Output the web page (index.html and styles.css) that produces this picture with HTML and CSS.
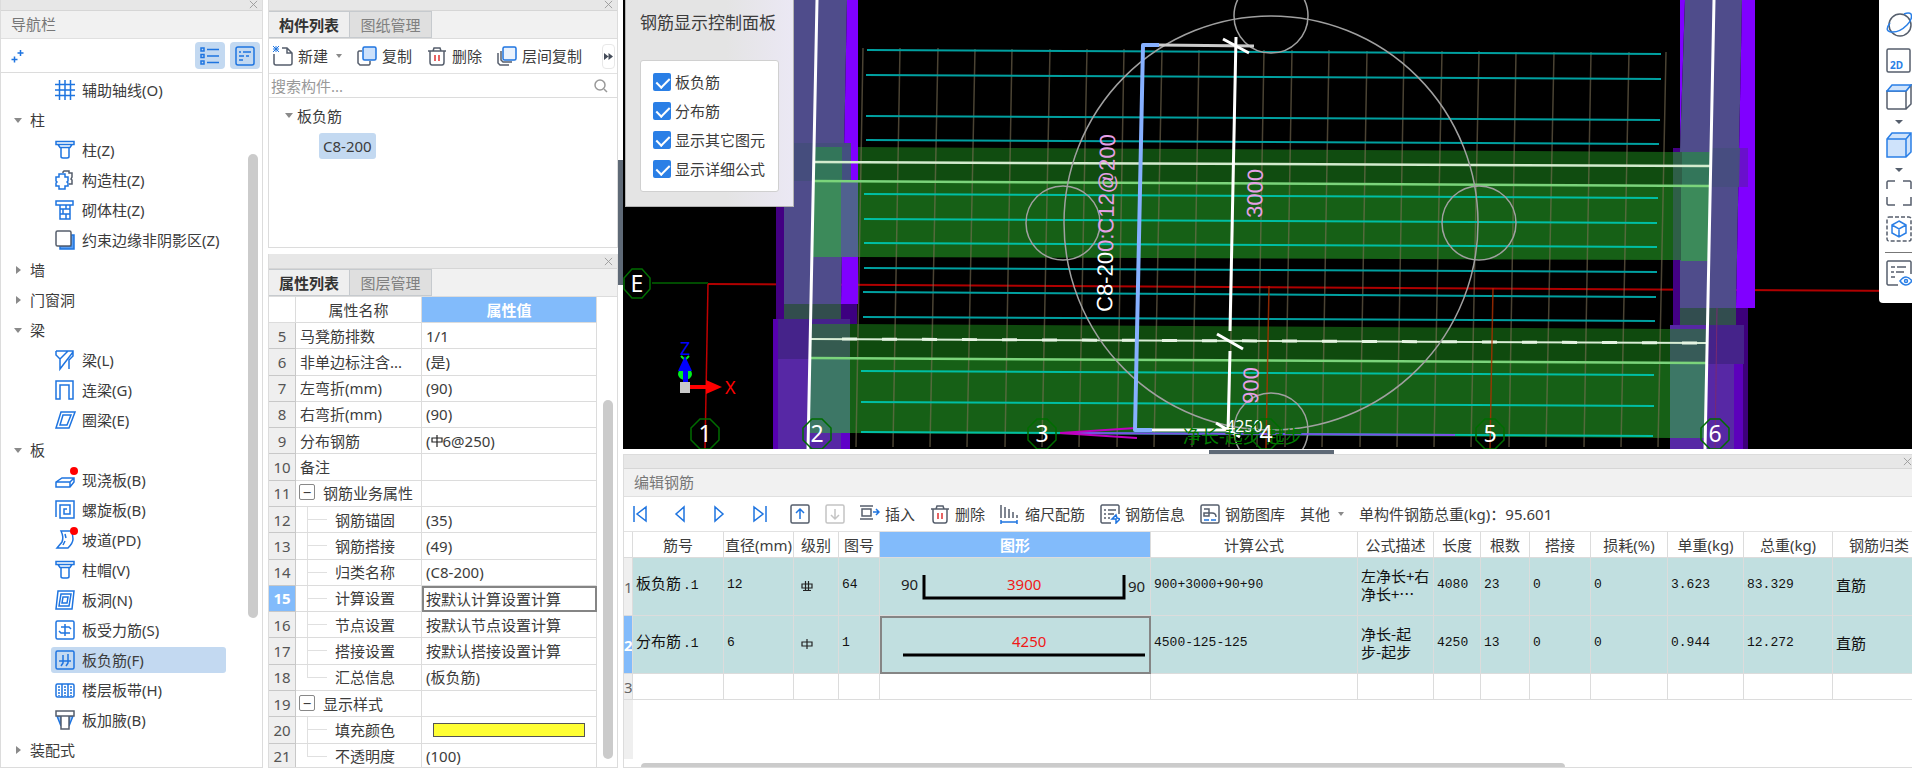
FILE: index.html
```
<!DOCTYPE html>
<html lang="zh-CN">

<head>
    <meta charset="utf-8">
    <meta name="viewport" content="width=device-width, initial-scale=1">
    <title>板负筋</title>
    <link rel="stylesheet" href="styles.css">
</head>

<body>
    <!-- shared icons -->
    <svg class="defs" aria-hidden="true">
        <symbol id="close" viewBox="0 0 10 10"><path d="M1 1l8 8M9 1l-8 8" stroke="#999" fill="none" /></symbol>
        <symbol id="trash" viewBox="0 0 20 20"><path d="M1 5h18M6 5l1-3h6l1 3M3 5v11q0 3 2 3h10q2 0 2-3V5" stroke="#555e6c" stroke-width="1.5" fill="none" /><path d="M8 9v6M12 9v6" stroke="#e03030" stroke-width="1.5" /></symbol>
        <symbol id="cap" viewBox="0 0 20 20"><path d="M1 1.500h18v3h-18zM3 4.500l2 3h10l2-3M6 7.500v9q0 1.500 2 1.500h4q2 0 2-1.500v-9" stroke="#1e74e0" stroke-width="1.500" fill="none" /></symbol>
    </svg>

    <nav class="panel nav">
        <div class="titlebar short"><button aria-label="关闭"><svg><use href="#close" /></svg></button></div>
        <h2>导航栏</h2>
        <div class="nav-tools">
            <button class="plus" aria-label="添加"><svg viewBox="0 0 14 14"><path d="M9.500 1v6M6.500 4h6M3.500 7.500v6M0.500 10.500h6" /></svg></button>
            <button class="toggle" aria-label="列表"><svg viewBox="0 0 20 20"><path d="M1 2h3v3h-3zM1 8.500h3v3h-3zM1 15h3v3h-3zM7 3.500h12M7 10h12M7 16.500h12" /></svg></button>
            <button class="toggle" aria-label="详情"><svg viewBox="0 0 20 20"><rect x="1" y="1" width="18" height="18" rx="2" /><path d="M4 6h2M8 6h8M4 10h5M11 10h3M4 14h4" /></svg></button>
        </div>
        <ul class="tree">
            <li><a href="#"><svg viewBox="0 0 20 20"><path d="M0 4.500h20M0 10h20M0 15.500h20M4.500 0v20M10 0v20M15.500 0v20" /></svg>辅助轴线(O)</a></li>
            <li class="group open">柱</li>
            <li><a href="#"><svg><use href="#cap" /></svg>柱(Z)</a></li>
            <li><a href="#"><svg viewBox="0 0 20 20"><path d="M8 3V2l1-1h5v2h3v4l-1 2 1 1v4h-3" stroke="#555e6c" /><path d="M4 4h6v3h3v4l-1 1 1 1v3h-3v3h-6v-3h-3v-3l1-1-1-1v-4h3z" fill="#fff" /></svg>构造柱(Z)</a></li>
            <li><a href="#"><svg viewBox="0 0 20 20"><path d="M1 1h17v4h-17zM5 5v14h10v-14M5 9h10M5 14h10M11 5v4M8 9v5M11 14v5" /></svg>砌体柱(Z)</a></li>
            <li><a href="#"><svg viewBox="0 0 20 20"><path d="M16 5h3v14h-14v-3h11z" fill="#5b9ef0" /><rect x="1" y="1" width="15" height="15" rx="1.500" fill="#fff" stroke="#555e6c" /></svg>约束边缘非阴影区(Z)</a></li>
            <li class="group">墙</li>
            <li class="group">门窗洞</li>
            <li class="group open">梁</li>
            <li><a href="#"><svg viewBox="0 0 20 20"><path d="M1 1h17v5l-4 4v9M1 1v4l4 4v10l13-17M5 9l8-8" /></svg>梁(L)</a></li>
            <li><a href="#"><svg viewBox="0 0 20 20"><path d="M1 19V1h17v18h-4V5h-9v14z" /></svg>连梁(G)</a></li>
            <li><a href="#"><svg viewBox="0 0 20 20"><path d="M6 2h14l-6 16h-13zM8 5h8l-4 10h-7z" /></svg>圈梁(E)</a></li>
            <li class="group open">板</li>
            <li><a href="#"><svg viewBox="0 0 20 20"><path d="M1 12l6-4h12v4l-4 5h-14zM1 12h14l4-4M15 12v5" /><circle cx="19" cy="1" r="4" class="dot" /></svg>现浇板(B)</a></li>
            <li><a href="#"><svg viewBox="0 0 20 20"><path d="M1 17V1h18v17h-14V5h10v9h-6V9h3" /></svg>螺旋板(B)</a></li>
            <li><a href="#"><svg viewBox="0 0 20 20"><path d="M6 1q3 6 1 11l-5 6h11q5-5 5-9 0-5-2-8zM10 4l1 4M10 11l-2 4" /><circle cx="19" cy="1" r="4" class="dot" /></svg>坡道(PD)</a></li>
            <li><a href="#"><svg><use href="#cap" /></svg>柱帽(V)</a></li>
            <li><a href="#"><svg viewBox="0 0 20 20"><path d="M3 1h16l-2 18h-16zM6 4h10l-2 12h-10zM8 7h5l-1 6h-5z" /></svg>板洞(N)</a></li>
            <li><a href="#"><svg viewBox="0 0 20 20"><rect x="1" y="1" width="18" height="18" rx="1.500" /><path d="M10 4v12M6 7h8l2 2M4 11l2 2h9" /></svg>板受力筋(S)</a></li>
            <li><a href="#" class="selected"><svg viewBox="0 0 20 20"><rect x="1" y="1" width="18" height="18" rx="1.500" /><path d="M4 11h12M8 5v8l-2 3M13 4v9l-2 3" /></svg>板负筋(F)</a></li>
            <li><a href="#"><svg viewBox="0 0 20 20"><rect x="1" y="4" width="18" height="13" rx="1.500" /><path d="M7 4v13M13 4v13" /><path d="M4 6v10M10 6v10M16 6v10" stroke-dasharray="2 1" /></svg>楼层板带(H)</a></li>
            <li><a href="#"><svg viewBox="0 0 20 20"><path d="M2 6l4 10v-10zM18 6l-4 10v-10z" fill="#9cc6f8" /><path d="M1 1h18v5h-18zM6 6v13h8v-13" stroke="#555e6c" fill="#fff" /></svg>板加腋(B)</a></li>
            <li class="group">装配式</li>
        </ul>
        <div class="vscroll"></div>
    </nav>

    <div class="middle">
        <section class="panel components">
            <div class="titlebar short"><button aria-label="关闭"><svg><use href="#close" /></svg></button></div>
            <div class="tabs"><button class="active">构件列表</button><button>图纸管理</button></div>
            <div class="toolbar">
                <button><svg viewBox="0 0 20 20"><path d="M1 8v9q0 2 2 2h14q2 0 2-2V7l-5-5h-5M14 2v5h5" stroke="#555e6c" stroke-width="1.500" fill="none" /><path d="M0 0l6 6M6 0l-6 6M3 0v6M0 3h6" stroke="#1e74e0" /></svg>新建<i class="caret"></i></button>
                <button><svg viewBox="0 0 20 20"><path d="M5 5h-3l-1 1v11l2 2h9l1-1v-3" stroke="#555e6c" stroke-width="1.500" fill="none" /><rect x="6" y="1" width="13" height="13" rx="1.500" fill="#cde1fb" stroke="#1e74e0" stroke-width="1.500" /></svg>复制</button>
                <button><svg><use href="#trash" /></svg>删除</button>
                <button><svg viewBox="0 0 20 20"><path d="M1 7v10l2 2h9M4 5v9l2 2h9" stroke="#555e6c" stroke-width="1.500" fill="none" /><rect x="6" y="1" width="13" height="13" rx="1.500" fill="#eaf2fd" stroke="#1e74e0" stroke-width="1.500" /></svg>层间复制</button>
                <button class="more" aria-label="更多"><svg viewBox="0 0 10 10"><path d="M0 1l5 4-5 4zM5 1l5 4-5 4z" fill="#444c59" /></svg></button>
            </div>
            <label class="search"><input type="text" placeholder="搜索构件..." aria-label="搜索构件"><svg viewBox="0 0 14 14"><circle cx="6" cy="6" r="5" /><path d="M10 10l3 3" /></svg></label>
            <div class="comp-tree">
                <div class="comp-group">板负筋</div>
                <a href="#">C8-200</a>
            </div>
        </section>

        <section class="panel props">
            <div class="titlebar"><button aria-label="关闭"><svg><use href="#close" /></svg></button></div>
            <div class="tabs"><button class="active">属性列表</button><button>图层管理</button></div>
            <div class="prop-body">
                <table class="prop-table">
                    <thead><tr><th class="no"></th><th>属性名称</th><th class="val">属性值</th></tr></thead>
                    <tbody>
                        <tr><td>5</td><td>马凳筋排数</td><td>1/1</td></tr>
                        <tr><td>6</td><td>非单边标注含...</td><td>(是)</td></tr>
                        <tr><td>7</td><td>左弯折(mm)</td><td>(90)</td></tr>
                        <tr><td>8</td><td>右弯折(mm)</td><td>(90)</td></tr>
                        <tr><td>9</td><td>分布钢筋</td><td>(<svg class="grade" viewBox="0 0 12 12"><path d="M1 3h10v4h-10zM6 0v12" /></svg>6@250)</td></tr>
                        <tr><td>10</td><td>备注</td><td></td></tr>
                        <tr class="head"><td>11</td><td><button>−</button>钢筋业务属性</td><td></td></tr>
                        <tr class="sub"><td>12</td><td>钢筋锚固</td><td>(35)</td></tr>
                        <tr class="sub"><td>13</td><td>钢筋搭接</td><td>(49)</td></tr>
                        <tr class="sub"><td>14</td><td>归类名称</td><td>(C8-200)</td></tr>
                        <tr class="sub current"><td>15</td><td>计算设置</td><td>按默认计算设置计算</td></tr>
                        <tr class="sub"><td>16</td><td>节点设置</td><td>按默认节点设置计算</td></tr>
                        <tr class="sub"><td>17</td><td>搭接设置</td><td>按默认搭接设置计算</td></tr>
                        <tr class="sub last"><td>18</td><td>汇总信息</td><td>(板负筋)</td></tr>
                        <tr class="head"><td>19</td><td><button>−</button>显示样式</td><td></td></tr>
                        <tr class="sub"><td>20</td><td>填充颜色</td><td><div class="swatch"></div></td></tr>
                        <tr class="sub last"><td>21</td><td>不透明度</td><td>(100)</td></tr>
                    </tbody>
                </table>
                <div class="vscroll"></div>
            </div>
        </section>
    </div>

    <div class="splitter"><button aria-label="收起"></button></div>

    <main>
        <div class="viewport">
            <svg class="scene" viewBox="623 0 1289 449" preserveAspectRatio="xMinYMin slice">
                <!-- axis lines -->
                <path d="M652 283H708" stroke="#006400" stroke-width="1.500" />
                <path d="M708 284L1912 291" stroke="#b00000" stroke-width="2" />
                <path d="M708 284L705 449" stroke="#c00000" stroke-width="1.500" />
                <!-- left column -->
                <path d="M776 195H784V449H773V319H776z" fill="#430083" />
                <path d="M784 0H847L841 304H784z" fill="#4f4c8b" />
                <path d="M847 0H858V304H841z" fill="#8000ff" />
                <path d="M793 143H851V181H793z" fill="#454d7d" />
                <path d="M784 304H841V324H784z" fill="#324d4d" />
                <path d="M841 304H857V340H841z" fill="#3d0080" />
                <path d="M773 319H850V449H773z" fill="#5728a5" />
                <path d="M773 319H850V359H773z" fill="#45238a" />
                <path d="M841 433H850V449H841z" fill="#6000c8" />
                <path d="M773 319H778V449H773z" fill="#5600b0" />
                <!-- right column -->
                <path d="M1673 148H1680V449H1670V325H1673z" fill="#430083" />
                <path d="M1680 0H1685L1680 150z" fill="#8000ff" />
                <path d="M1685 0H1742L1736 308H1680V150z" fill="#4f4c8b" />
                <path d="M1742 0H1755V308H1736z" fill="#8000ff" />
                <path d="M1711 148H1740V187H1710z" fill="#474d80" />
                <path d="M1740 148H1748V187H1739z" fill="#6a10cc" />
                <path d="M1680 308H1736V325H1680z" fill="#324d4f" />
                <path d="M1736 308H1748V449H1736z" fill="#3d007a" />
                <path d="M1670 325H1734V449H1670z" fill="#5728a5" />
                <path d="M1706 325H1744V364H1706z" fill="#45238a" />
                <path d="M1734 364H1743V449H1734z" fill="#5c00bb" />
                <path d="M1717 308L1715 449" stroke="#7a2a70" />
                <!-- beams -->
                <path d="M858 147L1673 152V187L858 181z" fill="#104c10" />
                <path d="M858 181L1673 186V260L858 257z" fill="#166016" />
                <path d="M814 147H842V181H813z" fill="#33765a" />
                <path d="M813 181H841V257H812z" fill="#3c8a5a" />
                <path d="M841 181H858V257H841z" fill="#50618f" />
                <path d="M842 147H851V181H842z" fill="#435080" />
                <path d="M1673 152H1682V260H1673z" fill="#2f5f48" />
                <path d="M1682 152H1711V186H1682z" fill="#33765a" />
                <path d="M1681 186H1710L1708 261H1681z" fill="#3c8a5a" />
                <path d="M850 324L1670 329V363L850 358z" fill="#0f4a0e" />
                <path d="M850 358L1670 363V438L850 433z" fill="#166016" />
                <path d="M811 324H850V359H811z" fill="#355b50" />
                <path d="M811 359H850V433H809z" fill="#3d7766" />
                <path d="M1670 329H1707V363H1670z" fill="#375b58" />
                <path d="M1670 363H1706V438H1670z" fill="#3d7766" />
                <!-- vertical bars -->
                <path class="bars" d="M863 48L856 447M900 48L893 447M938 48L930 447M975 49L967 447M1012 49L1005 447M1050 49L1042 447M1087 49L1079 447M1124 49L1117 447M1162 50L1154 447M1199 50L1192 447M1236 50L1229 447M1264 50L1257 447M1292 50L1285 447M1329 50L1322 447M1367 51L1360 447M1404 51L1397 447M1442 51L1434 447M1479 51L1471 447M1516 52L1509 447M1554 52L1546 447M1591 52L1584 447M1629 52L1621 447M1666 52L1658 447" />
                <!-- horizontal bars -->
                <path class="cyan" d="M867 50L1661 54M866 75L1661 79M866 116L1660 120M866 140L1659 144M864 268L1657 272M863 292L1656 297M863 317L1655 321" />
                <path class="cyan lit" d="M864 194L1658 198M864 219L1657 223M864 243L1657 247M861 371L1654 375M861 402L1654 406M861 432L1653 436" />
                <path d="M813 162L1710 166" stroke="#d3ebce" stroke-width="2.500" />
                <path d="M813 181L1710 186M811 358L1706 363" stroke="#7bd47b" stroke-width="2.500" />
                <path d="M811 339L1706 343" stroke="#d8ecd4" stroke-width="2" />
                <path d="M842 339L1706 343" stroke="#e6f4e3" stroke-width="3" stroke-dasharray="15 25" />
                <path d="M817 0L808 449M1714 0L1705 449" stroke="#fff" stroke-width="3" />
                <path d="M1269 286L1266 449M1493 288L1490 449" stroke="#b03000" stroke-width="1.500" opacity="0.800" />
                <!-- selection handles -->
                <g class="ring"><circle cx="1271" cy="223" r="207" /><circle cx="1271" cy="16" r="37" /><circle cx="1063" cy="223" r="37" /><circle cx="1479" cy="223" r="37" /><circle cx="1271" cy="430" r="37" /></g>
                <!-- annotation -->
                <path d="M1060 433L1455 435" stroke="#7a50e8" stroke-width="2" />
                <path d="M1060 433L1136 428M1060 433L1137 438" stroke="#c000c0" stroke-width="2" />
                <path d="M1158 45L1254 46" stroke="#ccc" stroke-width="3" />
                <path d="M1236 37L1230 331M1230 351L1228 432M1151 430H1229M1223 39L1249 53M1217 334L1243 349M1216 423L1240 437" stroke="#fff" stroke-width="3" fill="none" />
                <path d="M1159 45H1143L1135 430H1152" stroke="#86b0ff" stroke-width="4" fill="none" stroke-linejoin="round" />
                <g class="dim">
                    <text transform="translate(1112 312) rotate(-89)"><tspan fill="#fff">C8-20</tspan>0:C12@200</text>
                    <text transform="translate(1262 218) rotate(-89)">3000</text>
                    <text transform="translate(1258 404) rotate(-89)">900</text>
                </g>
                <text class="note" x="1183" y="443">净长-起步-起步</text>
                <text class="note" x="1187" y="463">4500-125-125</text>
                <text x="1226" y="432" class="len">4250</text>
                <!-- axis marks -->
                <g class="axis">
                    <path d="M632 269h10l8 9v11l-8 9h-10l-8-9v-11zM700 419h10l9 9v12l-9 9h-10l-9-9v-12zM812 419h10l9 9v12l-9 9h-10l-9-9v-12zM1037 419h10l9 9v12l-9 9h-10l-9-9v-12zM1261 419h10l9 9v12l-9 9h-10l-9-9v-12zM1485 419h10l9 9v12l-9 9h-10l-9-9v-12zM1710 419h10l9 9v12l-9 9h-10l-9-9v-12z" />
                    <text x="637" y="292">E</text>
                    <text x="705" y="442">1</text>
                    <text x="817" y="442">2</text>
                    <text x="1042" y="442">3</text>
                    <text x="1266" y="442">4</text>
                    <text x="1490" y="442">5</text>
                    <text x="1715" y="442">6</text>
                </g>
                <!-- orientation gizmo -->
                <ellipse cx="685" cy="374" rx="7" ry="6" fill="#00ee20" />
                <path d="M681 356l4 4 4-4" stroke="#00ee20" stroke-width="2" fill="none" />
                <path d="M683 386V371H678L685 356L692 371H688V386z" fill="#0000ff" />
                <path d="M690 385H706V380L722 387L706 394V389H690z" fill="#f00" />
                <path d="M680 382h10v11h-10z" fill="#c8c8c8" />
                <text x="680" y="355" class="gizmo" fill="#0000ff">Z</text>
                <text x="725" y="394" class="gizmo" fill="#f00">X</text>
            </svg>

            <form class="display-panel">
                <h3>钢筋显示控制面板</h3>
                <div class="checks">
                    <label><input type="checkbox" checked>板负筋</label>
                    <label><input type="checkbox" checked>分布筋</label>
                    <label><input type="checkbox" checked>显示其它图元</label>
                    <label><input type="checkbox" checked>显示详细公式</label>
                </div>
            </form>

            <div class="view-tools">
                <button aria-label="旋转"><svg viewBox="0 0 26 26"><circle cx="14" cy="13" r="11" /><path d="M4 11q-6 8 1 9 8 1 16-7 6-6 4-11-2-2-7 0" class="b" /></svg></button>
                <button aria-label="二维"><svg viewBox="0 0 26 26"><rect x="1" y="1" width="23" height="23" rx="1.500" /><text x="4" y="21">2D</text></svg></button>
                <button aria-label="俯视"><svg viewBox="0 0 26 26"><path d="M1 7h19v18h-18l-1-1zM20 25l5-5V1l-5 6" /><path d="M1 7l5-6h19l-5 6z" class="b f" /></svg></button>
                <i class="caret"></i>
                <button aria-label="实体"><svg viewBox="0 0 26 26"><path d="M1 7l5-6h19v19l-5 5h-19zM1 7h19v18M20 7l5-6" class="b f" /></svg></button>
                <i class="caret"></i>
                <button aria-label="全屏"><svg viewBox="0 0 26 26"><path d="M1 9V2l1-1h7M17 1h7l1 1v7M25 17v8h-8M9 25h-7l-1-1v-7" /></svg></button>
                <button aria-label="区域"><svg viewBox="0 0 26 26"><rect x="1" y="1" width="24" height="24" rx="2" stroke-dasharray="4 2" /><path d="M13 5l7 4v8l-7 4-7-4v-8zM6 9l7 4 7-4M13 13v8" class="b" /></svg></button>
                <hr>
                <button aria-label="显示设置"><svg viewBox="0 0 26 26"><path d="M12 25h-10l-1-1V2l1-1h22l1 1v12M5 7h4M11 7h9M5 12h3M10 12h8M5 17h4" /><path d="M14 21q6-8 12 0-6 8-12 0z" class="b" /><circle cx="20" cy="21" r="1.500" class="b" /></svg></button>
            </div>
        </div>

        <div class="hsplit"><button aria-label="收起"></button></div>

        <section class="panel rebar">
            <div class="titlebar"><button aria-label="关闭"><svg><use href="#close" /></svg></button></div>
            <h2>编辑钢筋</h2>
            <div class="toolbar">
                <div class="steps">
                    <button aria-label="首条"><svg viewBox="0 0 20 20"><path d="M4 2v16M16 3v14l-9-7z" /></svg></button>
                    <button aria-label="上一条"><svg viewBox="0 0 20 20"><path d="M14 3v14l-8-7z" /></svg></button>
                    <button aria-label="下一条"><svg viewBox="0 0 20 20"><path d="M5 3v14l8-7z" /></svg></button>
                    <button aria-label="末条"><svg viewBox="0 0 20 20"><path d="M16 2v16M4 3v14l9-7z" /></svg></button>
                    <button aria-label="上移"><svg viewBox="0 0 20 20"><rect x="1" y="1" width="18" height="18" rx="1.500" stroke="#555e6c" /><path d="M10 15V6M6 9l4-4 4 4" /></svg></button>
                </div>
                <button disabled aria-label="下移"><svg viewBox="0 0 20 20" fill="none" stroke="#c4c4c4" stroke-width="1.500"><rect x="1" y="1" width="18" height="18" rx="1.500" /><path d="M10 5v9M6 11l4 4 4-4" /></svg></button>
                <button><svg viewBox="0 0 20 20" fill="none" stroke="#555e6c" stroke-width="1.500"><path d="M0 2h13M0 15h13M2 5h9v7h-9z" /><path d="M13 8h6M16 5l3 3-3 3" stroke="#1e74e0" /></svg>插入</button>
                <button><svg><use href="#trash" /></svg>删除</button>
                <button><svg viewBox="0 0 20 20" fill="none" stroke="#555e6c" stroke-width="1.500"><path d="M1 1v13M5 3v11M9 5v9M13 8v6M17 11v3" /><path d="M1 18h16M1 16v4M17 16v4" stroke="#1e74e0" /></svg>缩尺配筋</button>
                <button><svg viewBox="0 0 20 20" fill="none" stroke="#555e6c" stroke-width="1.500"><path d="M11 19h-9l-1-1V2l1-1h16l1 1v8M4 6h2M8 6h8M4 10h2M8 10h6M4 14h2M8 14h2" /><path d="M12 15l4-4 1 3 3 1-4 4v-4z" stroke="#1e74e0" /></svg>钢筋信息</button>
                <button><svg viewBox="0 0 20 20" fill="none" stroke="#555e6c" stroke-width="1.500"><rect x="1" y="1" width="18" height="18" rx="1.500" /><path d="M4 5h5v7h-5v-3h8q4 0 4 4" /><path d="M4 16h5M11 16h5" stroke="#1e74e0" /></svg>钢筋图库</button>
                <button>其他<i class="caret"></i></button>
                <span>单构件钢筋总重(kg)：95.601</span>
            </div>
            <div class="grid">
                <table>
                    <colgroup><col class="w8"><col class="w91"><col class="w70"><col class="w45"><col class="w41"><col class="w271"><col class="w207"><col class="w76"><col class="w47"><col class="w49"><col class="w61"><col class="w77"><col class="w76"><col class="w89"><col class="w92"></colgroup>
                    <thead>
                        <tr><th></th><th>筋号</th><th>直径(mm)</th><th>级别</th><th>图号</th><th class="on">图形</th><th>计算公式</th><th>公式描述</th><th>长度</th><th>根数</th><th>搭接</th><th>损耗(%)</th><th>单重(kg)</th><th>总重(kg)</th><th>钢筋归类</th></tr>
                    </thead>
                    <tbody>
                        <tr class="data">
                            <td>1</td>
                            <td class="cn">板负筋<span>.1</span></td>
                            <td>12</td>
                            <td><svg class="grade" viewBox="0 0 12 12"><path d="M1 4h10v4h-10zM4.500 1v9M7.500 1v9M2 10.500h8" /></svg></td>
                            <td>64</td>
                            <td class="shape"><svg viewBox="0 0 270 57"><path d="M44 17V40H244V17" stroke-width="3" /><text x="21" y="32">90</text><text x="127" y="32" class="red">3900</text><text x="248" y="34">90</text></svg></td>
                            <td>900+3000+90+90</td>
                            <td class="cn">左净长+右净长+⋯</td>
                            <td>4080</td><td>23</td><td>0</td><td>0</td><td>3.623</td><td>83.329</td>
                            <td class="cn">直筋</td>
                        </tr>
                        <tr class="data picked">
                            <td>2</td>
                            <td class="cn">分布筋<span>.1</span></td>
                            <td>6</td>
                            <td><svg class="grade" viewBox="0 0 12 12"><path d="M1 4h10v4h-10zM6 1v10" /></svg></td>
                            <td>1</td>
                            <td class="shape on"><svg viewBox="0 0 270 57"><path d="M23 39H265" stroke-width="3" /><text x="132" y="31" class="red">4250</text></svg></td>
                            <td>4500-125-125</td>
                            <td class="cn">净长-起<br>步-起步</td>
                            <td>4250</td><td>13</td><td>0</td><td>0</td><td>0.944</td><td>12.272</td>
                            <td class="cn">直筋</td>
                        </tr>
                        <tr><td>3</td><td></td><td></td><td></td><td></td><td></td><td></td><td></td><td></td><td></td><td></td><td></td><td></td><td></td><td></td></tr>
                    </tbody>
                </table>
                <div class="gutter"></div>
            </div>
            <div class="hscroll"><div></div></div>
        </section>
    </main>
</body>

</html>
```

FILE: styles.css
```
* {
    box-sizing: border-box;
}

body {
    margin: 0;
    display: flex;
    height: 100vh;
    overflow: hidden;
    background: #fff;
    color: #3c3c3c;
    font-family: "Noto Sans", "Noto Sans CJK SC", sans-serif;
    font-size: 15px;
    line-height: 20px;
}

button {
    border: 0;
    padding: 0;
    background: none;
    color: inherit;
    font: inherit;
    white-space: nowrap;
}

a {
    color: inherit;
    text-decoration: none;
}

svg {
    display: block;
    flex: none;
}

.defs {
    position: absolute;
    width: 0;
    height: 0;
}

.caret {
    display: inline-block;
    border: 4px solid transparent;
    border-top: 4px solid #8a8a8a;
    border-bottom: 0;
}

/* panels */
.panel {
    display: flex;
    flex-direction: column;
    border: 1px solid #dcdcdc;
    border-top: 0;
    background: #fff;
    overflow: hidden;
}

.titlebar {
    flex: none;
    display: flex;
    justify-content: flex-end;
    align-items: center;
    height: 15px;
    padding-right: 4px;
    background: #e7e7e7;
    border-bottom: 1px solid #d6d6d6;
}

.titlebar.short {
    height: 11px;
    align-items: flex-start;
}

.titlebar svg {
    width: 9px;
    height: 9px;
}

.panel h2 {
    flex: none;
    margin: 0;
    height: 28px;
    padding-left: 10px;
    background: #f1f1f1;
    border-bottom: 1px solid #e0e0e0;
    color: #777;
    font-size: 15px;
    font-weight: normal;
    line-height: 26px;
}

.vscroll {
    position: absolute;
    width: 10px;
    border-radius: 5px;
    background: #cbcbcb;
}

/* navigation */
.nav {
    position: relative;
    flex: none;
    width: 263px;
}

.nav-tools {
    flex: none;
    display: flex;
    align-items: center;
    gap: 5px;
    height: 34px;
    padding: 0 2px 0 10px;
    border-bottom: 1px solid #dcdcdc;
}

.nav-tools svg,
.tree svg,
.steps svg {
    fill: none;
    stroke: #1e74e0;
    stroke-width: 1.5;
}

.plus {
    margin-right: auto;
}

.plus svg {
    width: 14px;
    height: 14px;
}

.toggle {
    display: grid;
    place-items: center;
    width: 30px;
    height: 27px;
    border-radius: 4px;
    background: #c3d9f1;
}

.toggle svg {
    width: 20px;
    height: 20px;
}

.tree {
    list-style: none;
    margin: 0;
    padding: 2px 0 0;
}

.tree li {
    height: 30px;
    padding: 2px 0 2px 50px;
}

.tree a {
    display: flex;
    align-items: center;
    gap: 7px;
    width: 175px;
    height: 26px;
    padding-left: 4px;
    border-radius: 3px;
    white-space: nowrap;
}

.tree .selected {
    background: #c3d9f1;
}

.tree svg {
    width: 20px;
    height: 20px;
    overflow: visible;
}

.tree .dot {
    fill: #f00;
    stroke: none;
}

.tree .group {
    display: flex;
    align-items: center;
    gap: 8px;
    padding: 0 0 0 15px;
}

.group::before {
    content: "";
    margin-right: 1px;
    border: 4px solid transparent;
    border-left: 5px solid #8a8a8a;
    border-right: 0;
}

.group.open::before,
.comp-group::before {
    content: "";
    margin: 0 0 0 -2px;
    border: 4px solid transparent;
    border-top: 5px solid #8a8a8a;
    border-bottom: 0;
}

.nav .vscroll {
    top: 154px;
    bottom: 149px;
    right: 4px;
}

/* component list and properties */
.middle {
    flex: none;
    display: flex;
    flex-direction: column;
    gap: 6px;
    width: 350px;
    margin-left: 5px;
}

.components {
    flex: none;
    height: 248px;
}

.tabs {
    flex: none;
    display: flex;
    height: 28px;
    background: #f1f1f1;
    border-bottom: 1px solid #dcdcdc;
}

.tabs button {
    width: 82px;
    background: #dfdfdf;
    border: 1px solid #c6cace;
    border-left: 0;
    color: #808080;
}

.tabs .active {
    width: 81px;
    background: #efefef;
    color: #333;
    font-weight: bold;
}

.toolbar {
    flex: none;
    display: flex;
    align-items: center;
    gap: 15px;
    height: 35px;
    padding-left: 4px;
    border-bottom: 1px solid #e2e2e2;
}

.toolbar button {
    display: flex;
    align-items: center;
    gap: 5px;
}

.toolbar svg {
    width: 20px;
    height: 20px;
}

.toolbar .caret {
    margin-left: 3px;
    border-width: 4px 3px 0;
}

.toolbar .more {
    justify-content: center;
    margin-left: 5px;
    width: 13px;
    height: 25px;
    border: 1px solid #e8e8e8;
    border-radius: 4px;
}

.toolbar .more svg {
    width: 9px;
    height: 9px;
}

.search {
    flex: none;
    display: flex;
    align-items: center;
    height: 24px;
    padding: 0 9px 0 2px;
    border-bottom: 1px solid #dcdcdc;
}

.search input {
    flex: 1;
    min-width: 0;
    border: 0;
    padding: 0;
    outline: 0;
    font: inherit;
}

.search input::placeholder {
    color: #999;
}

.search svg {
    width: 14px;
    height: 14px;
    fill: none;
    stroke: #999;
    stroke-width: 1.5;
}

.comp-group {
    display: flex;
    align-items: center;
    gap: 4px;
    height: 35px;
    padding-left: 18px;
}

.comp-tree a {
    display: inline-block;
    margin-left: 50px;
    padding: 3px 4px;
    border-radius: 3px;
    background: #c3d9f1;
}

.props {
    flex: 1;
    min-height: 0;
}

.prop-body {
    position: relative;
    flex: 1;
    overflow: hidden;
}

.prop-body .vscroll {
    top: 103px;
    bottom: 8px;
    right: 4px;
}

.prop-table {
    table-layout: fixed;
    width: 328px;
    height: 473px;
    border-collapse: separate;
    border-spacing: 0;
}

.prop-table th,
.prop-table td {
    position: relative;
    height: 26px;
    padding: 0 4px;
    border-right: 1px solid #dcdcdc;
    border-bottom: 1px solid #dcdcdc;
    font-weight: normal;
    white-space: nowrap;
}

.prop-table .no {
    width: 27px;
}

.prop-table .val {
    width: 175px;
    background: #82bbfb;
    color: #fff;
    font-weight: bold;
}

.prop-table td:first-child {
    padding: 0;
    background: #efefef;
    border-color: #c8c8c8;
    color: #555;
    text-align: center;
}

.prop-table .sub td:nth-child(2) {
    padding-left: 39px;
}

.prop-table .sub td:nth-child(2)::before {
    content: "";
    position: absolute;
    left: 11px;
    top: 12px;
    width: 20px;
    border-top: 1px solid #e0e0e0;
}

.prop-table .sub td:nth-child(2)::after {
    content: "";
    position: absolute;
    left: 11px;
    top: 0;
    height: 100%;
    border-left: 1px solid #e0e0e0;
}

.prop-table .last td:nth-child(2)::after {
    height: 12px;
}

.prop-table .head td:nth-child(2) {
    padding-left: 3px;
}

.prop-table .head button {
    width: 16px;
    height: 16px;
    margin-right: 8px;
    border: 1px solid #888;
    border-radius: 2px;
    line-height: 12px;
    vertical-align: 1px;
}

.prop-table .current td:first-child {
    background: #82bbfb;
    color: #fff;
    font-weight: bold;
}

.prop-table .current td:last-child {
    padding: 0 2px;
    border: 2px solid #858585;
}

.swatch {
    height: 14px;
    margin: 0 7px;
    border: 1px solid #555;
    background: #ff3;
}

.grade {
    display: inline-block;
    width: 12px;
    height: 12px;
    fill: none;
    stroke: #222;
    stroke-width: 1.2;
}

/* splitters */
.splitter {
    flex: none;
    width: 5px;
    padding-top: 160px;
}

.splitter button {
    display: block;
    width: 5px;
    height: 125px;
    background: #5e6976;
}

.hsplit {
    flex: none;
    height: 5px;
    padding-left: 8px;
    text-align: center;
    line-height: 0;
}

.hsplit button {
    width: 125px;
    height: 5px;
    background: #5e6976;
}

/* drawing area */
main {
    flex: 1;
    min-width: 0;
    display: flex;
    flex-direction: column;
}

.viewport {
    position: relative;
    flex: 1;
    min-height: 0;
    background: #000;
    overflow: hidden;
}

.scene {
    width: 100%;
    height: 100%;
}

.bars {
    stroke: #7d7156;
    stroke-width: 1.5;
    opacity: 0.6;
}

.cyan {
    stroke: #00a0a0;
    stroke-width: 2;
}

.cyan.lit {
    stroke: #00bfa4;
}

.ring {
    fill: none;
    stroke: #a0a0a0;
    stroke-width: 1.5;
}

.dim {
    fill: #e6a0e6;
    font-family: "Liberation Sans Narrow", "Liberation Sans", sans-serif;
    font-size: 22px;
}

.note {
    fill: #007a00;
    font-size: 18px;
}

.len {
    fill: #fff;
    font-size: 16px;
}

.axis path {
    fill: none;
    stroke: #006c00;
    stroke-width: 1.5;
}

.axis text {
    fill: #fff;
    font-size: 23px;
    text-anchor: middle;
}

.gizmo {
    font-size: 18px;
}

.display-panel {
    position: absolute;
    left: 2px;
    top: 0;
    width: 169px;
    padding: 10px 14px 14px;
    border: 1px solid #b4b4b4;
    border-top: 0;
    background: linear-gradient(90deg, #e4e4e4 60%, #ebe8f4);
}

.display-panel h3 {
    margin: 0 0 24px;
    font-size: 17px;
    font-weight: normal;
    line-height: 26px;
    white-space: nowrap;
}

.checks {
    display: flex;
    flex-direction: column;
    gap: 9px;
    padding: 11px 12px 12px;
    border: 1px solid #d0d0d0;
    border-radius: 3px;
    background: #fff;
}

.checks label {
    display: flex;
    align-items: center;
    gap: 4px;
    white-space: nowrap;
}

.checks input {
    appearance: none;
    position: relative;
    flex: none;
    width: 18px;
    height: 18px;
    margin: 0;
    border-radius: 2px;
    background: #2a7fe6;
}

.checks input::after {
    content: "";
    position: absolute;
    left: 6px;
    top: 2px;
    width: 6px;
    height: 11px;
    border: solid #fff;
    border-width: 0 2px 2px 0;
    transform: rotate(45deg);
}

.view-tools {
    position: absolute;
    top: 0;
    right: 0;
    display: flex;
    flex-direction: column;
    align-items: center;
    gap: 10px;
    width: 33px;
    height: 303px;
    padding: 12px 0 0 6px;
    background: #fff;
    border-radius: 0 0 0 4px;
    overflow: hidden;
}

.view-tools svg {
    width: 26px;
    height: 26px;
    fill: none;
    stroke: #555e6c;
    stroke-width: 1.5;
}

.view-tools .b,
.view-tools text {
    stroke: #2a7fe6;
}

.view-tools .f {
    fill: #cfe3fb;
}

.view-tools text {
    fill: #2a7fe6;
    stroke: none;
    font-size: 10px;
    font-weight: bold;
}

.view-tools .caret {
    border-top-color: #555e6c;
    margin-bottom: -2px;
}

.view-tools hr {
    width: 27px;
    margin: 0 0 -3px;
    border: 0;
    border-top: 1px solid #777;
}

/* rebar editor */
.rebar {
    flex: none;
    height: 314px;
    border-top: 1px solid #dcdcdc;
    border-right: 0;
}

.rebar .titlebar {
    height: 14px;
    padding-right: 0;
}

.rebar .toolbar {
    padding-left: 6px;
}

.steps {
    display: flex;
    gap: 20px;
}

.toolbar span {
    white-space: nowrap;
}

.grid {
    flex: 1;
    display: flex;
    flex-direction: column;
    overflow: hidden;
}

.grid table {
    flex: none;
    table-layout: fixed;
    width: 1302px;
    border-collapse: separate;
    border-spacing: 0;
}

.grid th {
    height: 26px;
    padding: 0;
    border-right: 1px solid #dcdcdc;
    border-bottom: 1px solid #dcdcdc;
    font-weight: normal;
    white-space: nowrap;
}

.grid th.on {
    background: #82bbfb;
    color: #fff;
    font-weight: bold;
}

.grid td {
    height: 26px;
    padding: 0 3px;
    border-right: 1px solid #dcdcdc;
    border-bottom: 1px solid #dcdcdc;
    color: #111;
    font-family: "Liberation Mono", monospace;
    font-size: 13px;
}

.grid .data td {
    height: 58px;
    padding-bottom: 4px;
    background: #c1dfe0;
}

.grid td:first-child,
.grid .data td:first-child {
    padding: 0;
    background: #efefef;
    color: #666;
    font-family: inherit;
    font-size: 15px;
    overflow: hidden;
}

.grid .picked td:first-child {
    background: #82bbfb;
    color: #fff;
    font-weight: bold;
}

.grid .data .cn {
    font-family: "Noto Sans CJK SC", sans-serif;
    font-size: 15px;
    line-height: 18px;
}

.cn span {
    padding-left: 2px;
    font-family: "Liberation Mono", monospace;
    font-size: 13px;
}

.grid .grade {
    margin-left: 4px;
    vertical-align: -4px;
}

.grid .data .shape {
    padding: 0;
}

.grid .data .shape.on {
    outline: 2px solid #858585;
    outline-offset: -2px;
}

.shape svg {
    width: 270px;
    height: 57px;
    fill: none;
    stroke: #000;
}

.shape text {
    fill: #222;
    stroke: none;
    font-family: "Noto Sans", sans-serif;
    font-size: 15px;
}

.shape .red {
    fill: #f01818;
}

.w8 { width: 9px; }
.w41 { width: 41px; }
.w45 { width: 45px; }
.w47 { width: 47px; }
.w49 { width: 49px; }
.w61 { width: 61px; }
.w70 { width: 70px; }
.w76 { width: 76px; }
.w77 { width: 77px; }
.w89 { width: 89px; }
.w91 { width: 91px; }
.w92 { width: 93px; }
.w207 { width: 207px; }
.w271 { width: 271px; }

.gutter {
    flex: 1;
    width: 9px;
    background: #efefef;
}

.hscroll {
    flex: none;
    height: 4px;
    margin-top: 4px;
    padding: 0 347px 0 17px;
}

.hscroll div {
    height: 8px;
    border-radius: 4px;
    background: #cbcbcb;
}
```
